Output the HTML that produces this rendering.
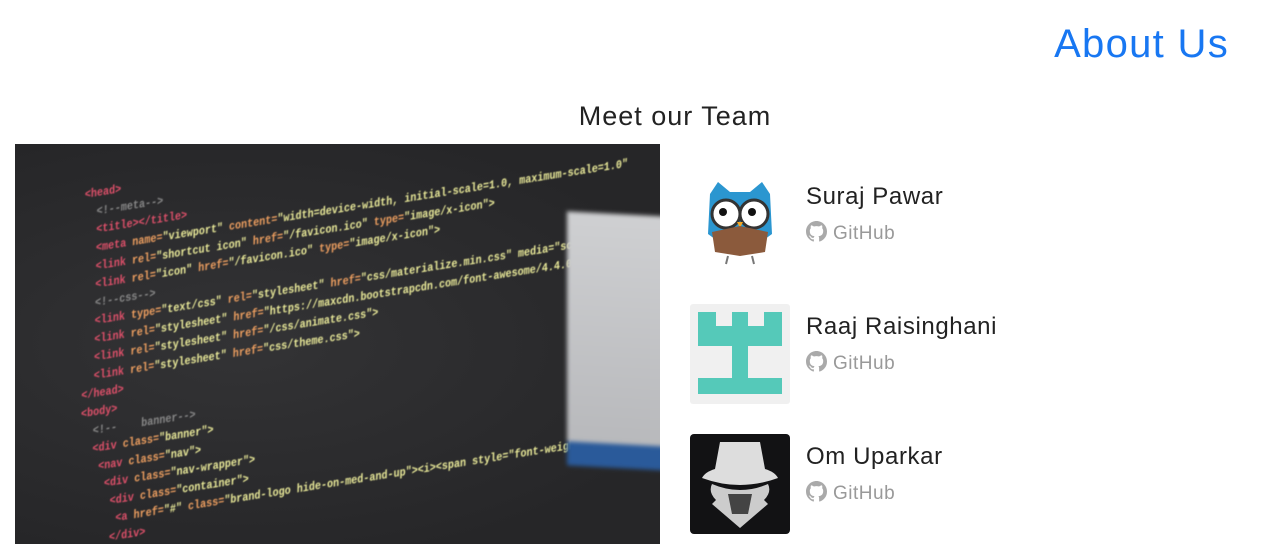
<!DOCTYPE html>
<html><head><meta charset="utf-8"><style>
body{margin:0;width:1288px;height:544px;overflow:hidden;background:#fff;font-family:"Liberation Sans",sans-serif;position:relative}
.about{position:absolute;right:59px;top:22px;font-size:40px;color:#1877f2;letter-spacing:1.3px}
.meet{position:absolute;left:0;width:1350px;text-align:center;top:101px;font-size:27px;color:#222;letter-spacing:1px}
.img{position:absolute;left:15px;top:144px;width:645px;height:400px;background:radial-gradient(ellipse at 35% 50%,#333335,#262628 80%);overflow:hidden}
.code{position:absolute;left:70px;top:42px;transform:rotate(-9deg) skewX(-10deg) scaleX(0.85);transform-origin:0 0;font-family:"Liberation Mono",monospace;font-size:12px;font-weight:bold;line-height:18px;color:#ecec9a;white-space:pre;filter:blur(0.5px)}
.r{color:#e0506a}.o{color:#f0a060}.g{color:#888}
.panel{position:absolute;left:552px;top:70px;width:100px;height:230px;background:linear-gradient(#cfd0d2,#b8b9bc);transform:skewY(3deg);border-bottom:24px solid #2a5a9a;filter:blur(2px)}
.m{position:absolute;left:690px;width:100px;height:100px}
.name{position:absolute;left:806px;font-size:24px;color:#222;letter-spacing:0.6px}
.gh{position:absolute;left:806px;font-size:19px;color:#999;letter-spacing:0.5px}
.gh svg{vertical-align:-3px;margin-right:6px}
</style></head><body>
<div class="about">About Us</div>
<div class="meet">Meet our Team</div>
<div class="img">
<div class="code"><span class="r">&lt;head&gt;</span>
  <span class="g">&lt;!--meta--&gt;</span>
  <span class="r">&lt;title&gt;&lt;/title&gt;</span>
  <span class="r">&lt;meta</span> <span class="o">name=</span>"viewport" <span class="o">content=</span>"width=device-width, initial-scale=1.0, maximum-scale=1.0"
  <span class="r">&lt;link</span> <span class="o">rel=</span>"shortcut icon" <span class="o">href=</span>"/favicon.ico" <span class="o">type=</span>"image/x-icon"&gt;
  <span class="r">&lt;link</span> <span class="o">rel=</span>"icon" <span class="o">href=</span>"/favicon.ico" <span class="o">type=</span>"image/x-icon"&gt;
  <span class="g">&lt;!--css--&gt;</span>
  <span class="r">&lt;link</span> <span class="o">type=</span>"text/css" <span class="o">rel=</span>"stylesheet" <span class="o">href=</span>"css/materialize.min.css" media="screen"
  <span class="r">&lt;link</span> <span class="o">rel=</span>"stylesheet" <span class="o">href=</span>"https://maxcdn.bootstrapcdn.com/font-awesome/4.4.0/css"
  <span class="r">&lt;link</span> <span class="o">rel=</span>"stylesheet" <span class="o">href=</span>"/css/animate.css"&gt;
  <span class="r">&lt;link</span> <span class="o">rel=</span>"stylesheet" <span class="o">href=</span>"css/theme.css"&gt;
<span class="r">&lt;/head&gt;</span>
<span class="r">&lt;body&gt;</span>
  <span class="g">&lt;!--    banner--&gt;</span>
  <span class="r">&lt;div</span> <span class="o">class=</span>"banner"&gt;
   <span class="r">&lt;nav</span> <span class="o">class=</span>"nav"&gt;
    <span class="r">&lt;div</span> <span class="o">class=</span>"nav-wrapper"&gt;
     <span class="r">&lt;div</span> <span class="o">class=</span>"container"&gt;
      <span class="r">&lt;a</span> <span class="o">href=</span>"#" <span class="o">class=</span>"brand-logo hide-on-med-and-up"&gt;&lt;i&gt;&lt;span style="font-weight:400"
     <span class="r">&lt;/div&gt;</span>
    <span class="r">&lt;/div&gt;</span></div>
<div class="panel"></div>
</div>

<svg class="m" style="top:174px" viewBox="0 0 100 100">
<path d="M20 20 L28 8 L40 18 L60 18 L72 8 L80 20 L82 60 Q50 85 18 60Z" fill="#2b96d0"/>
<circle cx="36" cy="40" r="14" fill="#fff" stroke="#333" stroke-width="3"/><circle cx="64" cy="40" r="14" fill="#fff" stroke="#333" stroke-width="3"/>
<circle cx="33" cy="38" r="4" fill="#111"/><circle cx="62" cy="38" r="4" fill="#111"/>
<path d="M47 48 L53 48 L50 54Z" fill="#f5a623"/>
<path d="M22 58 L50 52 L78 58 L75 78 L50 82 L25 78Z" fill="#8b5a3c"/>
<path d="M38 82 L36 90 M62 82 L64 90" stroke="#777" stroke-width="2"/>
</svg>
<svg class="m" style="top:304px" viewBox="0 0 100 100">
<rect width="100" height="100" rx="3" fill="#f0f0f0"/>
<path d="M8 8 H26 V22 H42 V8 H58 V22 H74 V8 H92 V42 H58 V74 H92 V90 H8 V74 H42 V42 H8Z" fill="#55c9b9"/>
</svg>
<svg class="m" style="top:434px" viewBox="0 0 100 100">
<rect width="100" height="100" rx="4" fill="#121214"/>
<path d="M30 8 L70 8 L75 35 Q85 38 88 44 Q50 58 12 44 Q15 38 25 35Z" fill="#ddd"/>
<path d="M22 50 Q18 58 26 66 L22 70 L50 94 L78 70 L74 66 Q82 58 78 50 Q50 62 22 50Z" fill="#ccc"/>
<path d="M38 60 L62 60 L58 80 L42 80Z" fill="#444"/>
</svg>

<div class="name" style="top:183px">Suraj Pawar</div>
<div class="gh" style="top:221px"><svg width="21" height="21" viewBox="0 0 16 16"><path fill="#aaa" d="M8 0C3.58 0 0 3.58 0 8c0 3.54 2.29 6.53 5.47 7.59.4.07.55-.17.55-.38v-1.34c-2.23.49-2.7-1.07-2.7-1.07-.36-.92-.89-1.17-.89-1.17-.73-.5.05-.49.05-.49.8.06 1.23.83 1.23.83.71 1.22 1.87.87 2.33.66.07-.52.28-.87.5-1.07-1.78-.2-3.64-.89-3.64-3.95 0-.87.31-1.59.82-2.15-.08-.2-.36-1.02.08-2.12 0 0 .67-.21 2.2.82.64-.18 1.32-.27 2-.27.68 0 1.36.09 2 .27 1.53-1.04 2.2-.82 2.2-.82.44 1.1.16 1.92.08 2.12.51.56.82 1.27.82 2.15 0 3.07-1.87 3.75-3.65 3.95.29.25.54.73.54 1.48v2.2c0 .21.15.46.55.38A8.01 8.01 0 0016 8c0-4.42-3.58-8-8-8z"/></svg>GitHub</div>
<div class="name" style="top:313px">Raaj Raisinghani</div>
<div class="gh" style="top:351px"><svg width="21" height="21" viewBox="0 0 16 16"><path fill="#aaa" d="M8 0C3.58 0 0 3.58 0 8c0 3.54 2.29 6.53 5.47 7.59.4.07.55-.17.55-.38v-1.34c-2.23.49-2.7-1.07-2.7-1.07-.36-.92-.89-1.17-.89-1.17-.73-.5.05-.49.05-.49.8.06 1.23.83 1.23.83.71 1.22 1.87.87 2.33.66.07-.52.28-.87.5-1.07-1.78-.2-3.64-.89-3.64-3.95 0-.87.31-1.59.82-2.15-.08-.2-.36-1.02.08-2.12 0 0 .67-.21 2.2.82.64-.18 1.32-.27 2-.27.68 0 1.36.09 2 .27 1.53-1.04 2.2-.82 2.2-.82.44 1.1.16 1.92.08 2.12.51.56.82 1.27.82 2.15 0 3.07-1.87 3.75-3.65 3.95.29.25.54.73.54 1.48v2.2c0 .21.15.46.55.38A8.01 8.01 0 0016 8c0-4.42-3.58-8-8-8z"/></svg>GitHub</div>
<div class="name" style="top:443px">Om Uparkar</div>
<div class="gh" style="top:481px"><svg width="21" height="21" viewBox="0 0 16 16"><path fill="#aaa" d="M8 0C3.58 0 0 3.58 0 8c0 3.54 2.29 6.53 5.47 7.59.4.07.55-.17.55-.38v-1.34c-2.23.49-2.7-1.07-2.7-1.07-.36-.92-.89-1.17-.89-1.17-.73-.5.05-.49.05-.49.8.06 1.23.83 1.23.83.71 1.22 1.87.87 2.33.66.07-.52.28-.87.5-1.07-1.78-.2-3.64-.89-3.64-3.95 0-.87.31-1.59.82-2.15-.08-.2-.36-1.02.08-2.12 0 0 .67-.21 2.2.82.64-.18 1.32-.27 2-.27.68 0 1.36.09 2 .27 1.53-1.04 2.2-.82 2.2-.82.44 1.1.16 1.92.08 2.12.51.56.82 1.27.82 2.15 0 3.07-1.87 3.75-3.65 3.95.29.25.54.73.54 1.48v2.2c0 .21.15.46.55.38A8.01 8.01 0 0016 8c0-4.42-3.58-8-8-8z"/></svg>GitHub</div>
</body></html>
